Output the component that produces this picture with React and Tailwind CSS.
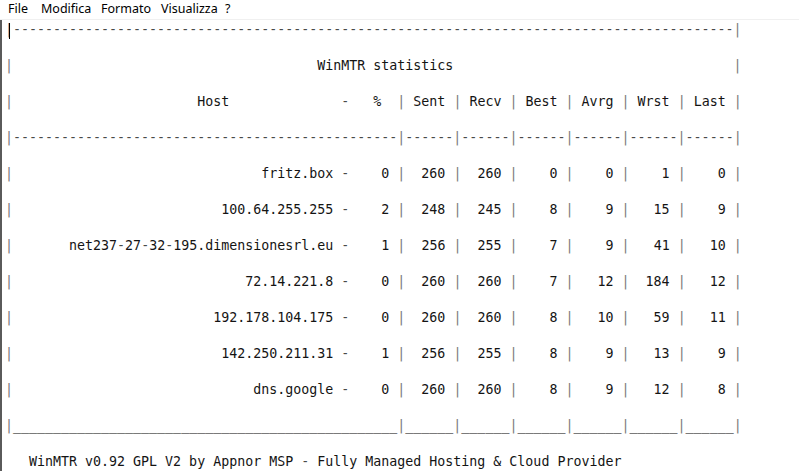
const hosts = [
  ['fritz.box', 0, 260, 260, 0, 0, 1, 0],
  ['100.64.255.255', 2, 248, 245, 8, 9, 15, 9],
  ['net237-27-32-195.dimensionesrl.eu', 1, 256, 255, 7, 9, 41, 10],
  ['72.14.221.8', 0, 260, 260, 7, 12, 184, 12],
  ['192.178.104.175', 0, 260, 260, 8, 10, 59, 11],
  ['142.250.211.31', 1, 256, 255, 8, 9, 13, 9],
  ['dns.google', 0, 260, 260, 8, 9, 12, 8],
]

const pad4 = (v) => String(v).padStart(4)

// same layout as WinMTR's text export
const lines = [
  '|' + '-'.repeat(90) + '|',
  '|' + ' '.repeat(38) + 'WinMTR statistics' + ' '.repeat(35) + '|',
  '|' + ' '.repeat(23) + 'Host' + ' '.repeat(14) + '-   %  |' +
    ['Sent', 'Recv', 'Best', 'Avrg', 'Wrst', 'Last'].map((h) => ' ' + h + ' |').join(''),
  '|' + '-'.repeat(48) + ('|' + '-'.repeat(6)).repeat(6) + '|',
  ...hosts.map(([host, pct, ...cols]) =>
    '|' + host.padStart(40) + ' - ' + pad4(pct) + ' |' + cols.map((v) => ' ' + pad4(v) + ' |').join('')
  ),
  '|' + '_'.repeat(48) + ('|' + '_'.repeat(6)).repeat(6) + '|',
  '   WinMTR v0.92 GPL V2 by Appnor MSP - Fully Managed Hosting & Cloud Provider',
]

function Line({ text }) {
  // pipes render lighter in the screenshot, dashes a bit too
  const parts = text.split(/(\|+|-+)/)
  return (
    <div className="h-[36px] leading-[18px] whitespace-pre">
      {parts.map((p, i) => {
        if (p.startsWith('|')) return <span key={i} className="text-[#7a7a7a]">{p}</span>
        if (p.startsWith('-')) return <span key={i} className="text-[#4a4a4a]">{p}</span>
        return <span key={i}>{p}</span>
      })}
    </div>
  )
}

export default function App() {
  const menu = [
    ['File', 'w-[33px]'],
    ['Modifica', 'w-[60px]'],
    ['Formato', 'w-[60px]'],
    ['Visualizza', 'w-[64px]'],
    ['?', 'w-[20px]'],
  ]
  return (
    <div className="w-[799px] h-[471px] bg-white overflow-hidden flex flex-col">
      <div className="h-[20px] flex items-center pl-[8px] pb-[1px] border-b border-[#f0f0f0] text-[12.5px] text-black font-['Noto_Sans',sans-serif]">
        {menu.map(([label, w]) => (
          <span key={label} className={w}>{label}</span>
        ))}
      </div>
      <div className="relative flex-1 border-l-2 border-[#5a5a5a] pl-[3px] pt-[1px] text-[13.3px] text-[#141414] font-['DejaVu_Sans_Mono',monospace]">
        {lines.map((l, i) => (
          <Line key={i} text={l} />
        ))}
        <div className="absolute left-[7px] top-[3px] w-[1px] h-[16px] bg-black" />
      </div>
    </div>
  )
}
